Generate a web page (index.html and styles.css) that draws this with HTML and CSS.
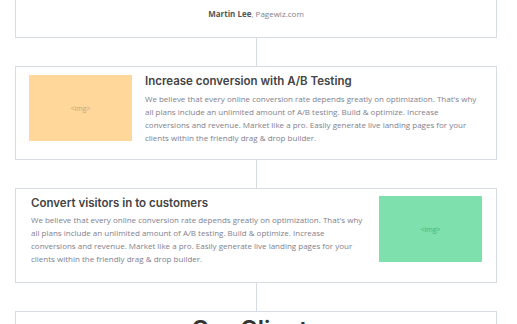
FILE: index.html
```html
<!DOCTYPE html>
<html lang="en">
<head>
  <meta charset="UTF-8">
  <meta name="viewport" content="width=device-width, initial-scale=1.0">
  <title>Features</title>
  <link rel="stylesheet" href="styles.css">
</head>
<body>
  <div class="container">
    <div class="box quote">
      <p class="author"><strong>Martin Lee</strong>, Pagewiz.com</p>
    </div>

    <div class="connector"></div>

    <div class="box feature">
      <div class="placeholder orange">&lt;img&gt;</div>
      <div class="feature-body">
        <h3>Increase conversion with A/B Testing</h3>
        <p>We believe that every online conversion rate depends greatly on optimization. That's why all plans include an unlimited amount of A/B testing. Build &amp; optimize. Increase conversions and revenue. Market like a pro. Easily generate live landing pages for your clients within the friendly drag &amp; drop builder.</p>
      </div>
    </div>

    <div class="connector"></div>

    <div class="box feature reverse">
      <div class="feature-body">
        <h3>Convert visitors in to customers</h3>
        <p>We believe that every online conversion rate depends greatly on optimization. That's why all plans include an unlimited amount of A/B testing. Build &amp; optimize. Increase conversions and revenue. Market like a pro. Easily generate live landing pages for your clients within the friendly drag &amp; drop builder.</p>
      </div>
      <div class="placeholder green">&lt;img&gt;</div>
    </div>

    <div class="connector"></div>

    <div class="box clients">
      <h2>Our Clients</h2>
    </div>
  </div>
</body>
</html>
```

FILE: styles.css
```css
body {
  font-family: "Open Sans", sans-serif;
  margin: 0;
  padding: 0;
  background-color: #ffffff;
  overflow: hidden;
}
.container {
  margin: -30px 20px 0 15px;
  display: flex;
  flex-direction: column;
}
.box {
  border: 1px solid #d6dce1;
  background: #ffffff;
}
.quote {
  padding: 37px 0 18px;
  text-align: center;
}
.author {
  margin: 0;
  font-size: 8px;
  line-height: 11px;
  color: #7d828c;
}
.author strong {
  color: #555;
  font-weight: 700;
}
.connector {
  width: 1px;
  height: 28px;
  background: #d6dce1;
  align-self: center;
}
.feature {
  display: flex;
  gap: 13px;
  padding: 6px 13px 15px;
}
.feature.reverse {
  gap: 14px;
  padding: 6px 14px 17px 15px;
}
.placeholder {
  flex: 0 0 103px;
  height: 66px;
  margin-top: 2px;
  display: flex;
  align-items: center;
  justify-content: center;
  font-size: 7px;
}
.reverse .placeholder {
  margin-top: 1px;
}
.orange {
  background: #ffd79a;
  color: #c4a57a;
}
.green {
  background: #7ee0ac;
  color: #4aae7a;
}
.feature-body {
  flex: 1;
}
.feature h3 {
  margin: 0;
  font-family: Inter, sans-serif;
  font-weight: 600;
  font-size: 11.5px;
  line-height: 16px;
  color: #444;
}
.feature p {
  margin: 3px 0 0;
  font-size: 8px;
  line-height: 13px;
  color: #80808e;
}
.reverse p {
  margin-top: 2px;
}
.clients {
  padding: 3px 0 20px;
  text-align: center;
}
.clients h2 {
  margin: 0;
  font-family: Inter, sans-serif;
  font-weight: 600;
  font-size: 24px;
  line-height: 30px;
  color: #333;
}
```
